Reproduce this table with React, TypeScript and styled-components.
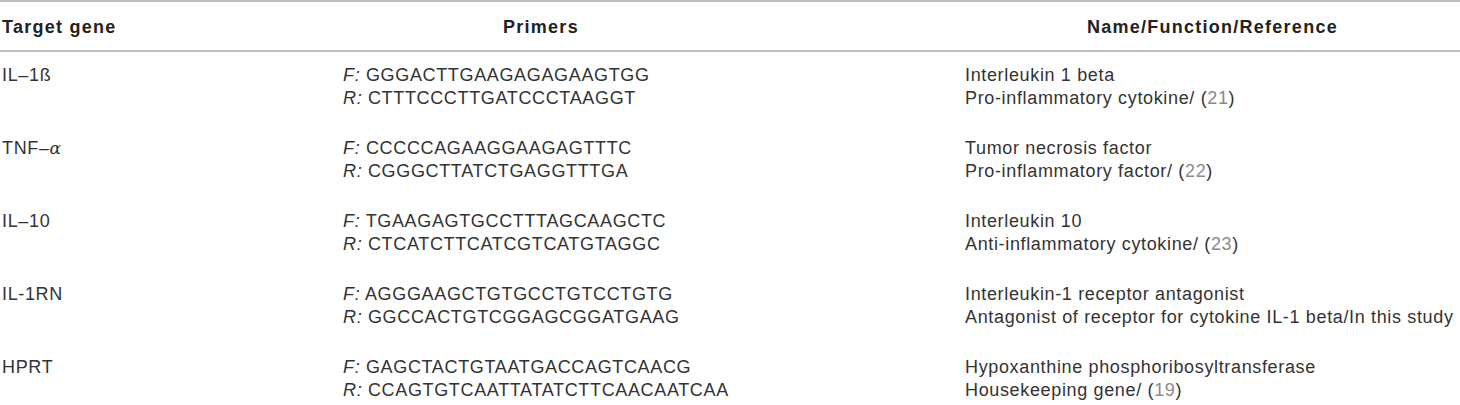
import React from 'react'
import styled, { createGlobalStyle } from 'styled-components'

const GlobalStyle = createGlobalStyle`
    html, body {
        margin: 0;
        padding: 0;
        background: #ffffff;
    }
    body {
        font-family: "Liberation Sans", Arial, Helvetica, sans-serif;
        color: #333333;
    }
`

const Table = styled.div`
    width: 1460px;
    border-top: 2px solid #bdbdbd;
`

const HeaderRow = styled.div`
    display: grid;
    grid-template-columns: 343px 622px 1fr;
    padding: 14px 0 11px;
    border-bottom: 2px solid #bdbdbd;
`

const HeadCell = styled.div<{ $center?: boolean; $width?: number }>`
    font-size: 18px;
    line-height: 23px;
    font-weight: 700;
    letter-spacing: 1.25px;
    color: #222222;
    padding-left: ${p => (p.$center ? 0 : 2)}px;
    text-align: ${p => (p.$center ? 'center' : 'left')};
    width: ${p => (p.$width ? `${p.$width}px` : 'auto')};
`

const Body = styled.div`
    display: flex;
    flex-direction: column;
    padding-top: 12px;
`

const Row = styled.div`
    display: grid;
    grid-template-columns: 343px 622px 1fr;
    padding-bottom: 27px;
    &:last-child {
        padding-bottom: 4px;
    };
`

const Cell = styled.div<{ $pad?: number }>`
    display: flex;
    flex-direction: column;
    padding-left: ${p => p.$pad ?? 0}px;
`

const Line = styled.div`
    font-size: 18px;
    line-height: 23px;
    letter-spacing: 0.65px;
    white-space: nowrap;
    color: #333333;
`

const Strand = styled.span`
    font-style: italic;
`

const Ref = styled.span`
    color: #8a8a8a;
`

const Greek = styled.span`
    font-family: "DejaVu Serif", "Liberation Serif", serif;
    font-style: italic;
    font-size: 17px;
`

interface GeneRow {
    gene: React.ReactNode;
    forward: string;
    reverse: string;
    name: string;
    fn: string;
    ref?: string;
}

const rows: GeneRow[] = [
    { gene: 'IL–1ß', forward: 'GGGACTTGAAGAGAGAAGTGG', reverse: 'CTTTCCCTTGATCCCTAAGGT', name: 'Interleukin 1 beta', fn: 'Pro-inflammatory cytokine/ ', ref: '21' },
    { gene: <>TNF–<Greek>α</Greek></>, forward: 'CCCCCAGAAGGAAGAGTTTC', reverse: 'CGGGCTTATCTGAGGTTTGA', name: 'Tumor necrosis factor', fn: 'Pro-inflammatory factor/ ', ref: '22' },
    { gene: 'IL–10', forward: 'TGAAGAGTGCCTTTAGCAAGCTC', reverse: 'CTCATCTTCATCGTCATGTAGGC', name: 'Interleukin 10', fn: 'Anti-inflammatory cytokine/ ', ref: '23' },
    { gene: 'IL-1RN', forward: 'AGGGAAGCTGTGCCTGTCCTGTG', reverse: 'GGCCACTGTCGGAGCGGATGAAG', name: 'Interleukin-1 receptor antagonist', fn: 'Antagonist of receptor for cytokine IL-1 beta/In this study' },
    { gene: 'HPRT', forward: 'GAGCTACTGTAATGACCAGTCAACG', reverse: 'CCAGTGTCAATTATATCTTCAACAATCAA', name: 'Hypoxanthine phosphoribosyltransferase', fn: 'Housekeeping gene/ ', ref: '19' },
]

const App = () => {
    return (
        <>
            <GlobalStyle />
            <Table>
                <HeaderRow>
                    <HeadCell>Target gene</HeadCell>
                    <HeadCell $center $width={396}>Primers</HeadCell>
                    <HeadCell $center>Name/Function/Reference</HeadCell>
                </HeaderRow>
                <Body>
                    {rows.map((r, i) => (
                        <Row key={i}>
                            <Cell $pad={2}>
                                <Line>{r.gene}</Line>
                            </Cell>
                            <Cell>
                                <Line><Strand>F:</Strand> {r.forward}</Line>
                                <Line><Strand>R:</Strand> {r.reverse}</Line>
                            </Cell>
                            <Cell>
                                <Line>{r.name}</Line>
                                <Line>{r.fn}{r.ref && <>(<Ref>{r.ref}</Ref>)</>}</Line>
                            </Cell>
                        </Row>
                    ))}
                </Body>
            </Table>
        </>
    )
}

export default App
